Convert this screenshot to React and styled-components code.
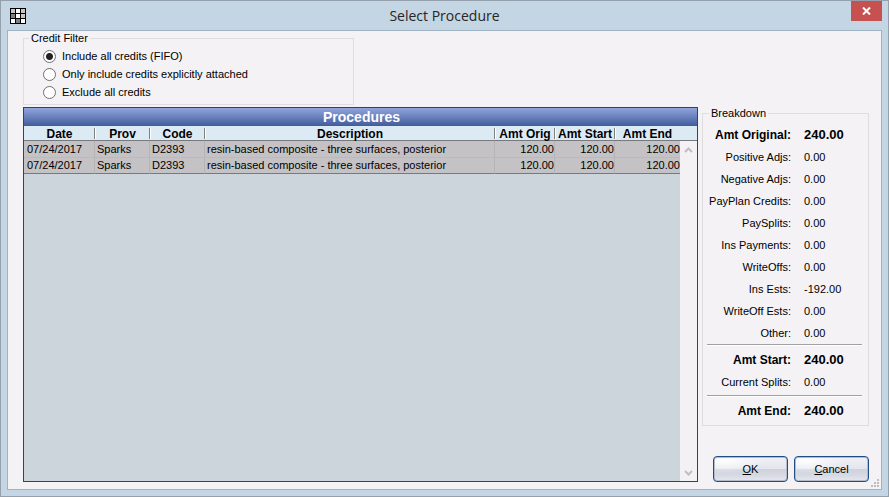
import React, { useState } from 'react'
import styled, { createGlobalStyle } from 'styled-components'

const filters = [
  'Include all credits (FIFO)',
  'Only include credits explicitly attached',
  'Exclude all credits',
]

const columns = [
  { title: 'Date', width: 71 },
  { title: 'Prov', width: 55 },
  { title: 'Code', width: 55 },
  { title: 'Description' },
  { title: 'Amt Orig', width: 60, right: true },
  { title: 'Amt Start', width: 60, right: true },
  { title: 'Amt End', width: 65, right: true },
]

const procedures = [
  ['07/24/2017', 'Sparks', 'D2393', 'resin-based composite - three surfaces, posterior', '120.00', '120.00', '120.00'],
  ['07/24/2017', 'Sparks', 'D2393', 'resin-based composite - three surfaces, posterior', '120.00', '120.00', '120.00'],
]

const breakdown = [
  [
    ['Amt Original:', '240.00', true],
    ['Positive Adjs:', '0.00'],
    ['Negative Adjs:', '0.00'],
    ['PayPlan Credits:', '0.00'],
    ['PaySplits:', '0.00'],
    ['Ins Payments:', '0.00'],
    ['WriteOffs:', '0.00'],
    ['Ins Ests:', '-192.00'],
    ['WriteOff Ests:', '0.00'],
    ['Other:', '0.00'],
  ],
  [
    ['Amt Start:', '240.00', true],
    ['Current Splits:', '0.00'],
  ],
  [['Amt End:', '240.00', true]],
]

export default function App() {
  const [filter, setFilter] = useState(0)

  return (
    <Window>
      <GlobalStyle />
      <TitleBar>
        <AppIcon />
        <Title>Select Procedure</Title>
        <CloseButton aria-label="Close">
          <svg width="9" height="8" viewBox="0 0 9 8">
            <path d="M1 .5 L8 7.5 M8 .5 L1 7.5" stroke="#fff" strokeWidth="2" />
          </svg>
        </CloseButton>
      </TitleBar>
      <Client>
        <FilterGroup>
          <Legend>Credit Filter</Legend>
          {filters.map((label, index) => (
            <RadioLabel key={label}>
              <Radio name="credits" checked={filter === index} onChange={() => setFilter(index)} />
              {label}
            </RadioLabel>
          ))}
        </FilterGroup>
        <Grid>
          <GridTitle>Procedures</GridTitle>
          <GridBody>
            <GridMain>
              <Table>
                <thead>
                  <tr>
                    {columns.map((col) => (
                      <Th key={col.title} $width={col.width}>{col.title}</Th>
                    ))}
                  </tr>
                </thead>
                <tbody>
                  {procedures.map((row, index) => (
                    <Tr key={index}>
                      {row.map((cell, i) => (
                        <Td key={i} $right={columns[i].right}>{cell}</Td>
                      ))}
                    </Tr>
                  ))}
                </tbody>
              </Table>
            </GridMain>
            <ScrollColumn>
              <ScrollHead />
              <ScrollBar>
                <ScrollButton aria-label="Scroll up"><Chevron d="M1 6 L4.5 2.5 L8 6" /></ScrollButton>
                <ScrollButton aria-label="Scroll down"><Chevron d="M1 2 L4.5 5.5 L8 2" /></ScrollButton>
              </ScrollBar>
            </ScrollColumn>
          </GridBody>
        </Grid>
        <Side>
          <BreakdownGroup>
            <Legend>Breakdown</Legend>
            {breakdown.map((rows, index) => (
              <React.Fragment key={index}>
                {index > 0 && <Rule />}
                <Totals>
                  {rows.map(([label, value, bold]) => (
                    <Total key={label} $bold={bold}>
                      <dt>{label}</dt>
                      <dd>{value}</dd>
                    </Total>
                  ))}
                </Totals>
              </React.Fragment>
            ))}
          </BreakdownGroup>
          <Buttons>
            <Button><u>O</u>K</Button>
            <Button><u>C</u>ancel</Button>
          </Buttons>
        </Side>
        <Grip />
      </Client>
    </Window>
  )
}

function AppIcon() {
  const fills = ['#c8c4c8', '#fff', '#c8c4c8', '#808080', '#fff', '#c8c4c8', '#fff', '#808080', '#fff']
  return (
    <IconSvg width="16" height="16" viewBox="0 0 16 16" shapeRendering="crispEdges">
      <rect width="16" height="16" fill="#000" />
      {fills.map((fill, i) => (
        <rect key={i} x={1 + (i % 3) * 5} y={1 + Math.floor(i / 3) * 5} width="4" height="4" fill={fill} />
      ))}
    </IconSvg>
  )
}

function Chevron({ d }) {
  return (
    <svg width="9" height="8" viewBox="0 0 9 8">
      <path d={d} fill="none" stroke="#bfbfbf" strokeWidth="2" />
    </svg>
  )
}

function Grip() {
  const dots = [[6, 0], [3, 3], [6, 3], [0, 6], [3, 6], [6, 6]]
  return (
    <GripSvg width="8" height="8" viewBox="0 0 8 8" shapeRendering="crispEdges">
      {dots.map(([x, y]) => <rect key={x + '-' + y} x={x} y={y} width="2" height="2" fill="#bfbdc0" />)}
    </GripSvg>
  )
}

const GlobalStyle = createGlobalStyle`
* {
  box-sizing: border-box;
}
body {
  margin: 0;
  font-family: "Liberation Sans", Arial, sans-serif;
  font-size: 11px;
  color: #000;
}
button, input {
  font: inherit;
  color: inherit;
}
`

const Window = styled.div`
display: flex;
flex-direction: column;
min-height: 100vh;
padding: 0 6px 6px;
border: 1px solid #94a1ad;
background-color: #c4d5e3;
`

const TitleBar = styled.header`
display: grid;
grid-template-columns: 1fr auto 1fr;
align-items: center;
height: 29px;
`

const IconSvg = styled.svg`
margin-left: 3px;
`

const Title = styled.h1`
margin: 0;
font-family: "Open Sans", "Segoe UI", sans-serif;
font-size: 14px;
font-weight: 400;
line-height: 20px;
color: #262626;
`

const CloseButton = styled.button`
display: flex;
align-items: center;
justify-content: center;
justify-self: end;
align-self: start;
width: 31px;
height: 20px;
padding: 0;
border: 0;
background-color: #c75050;
`

const Client = styled.main`
position: relative;
flex: 1;
display: grid;
grid-template-columns: 1fr 167px;
grid-template-rows: auto 1fr;
gap: 2px 4px;
padding: 1px 12px 7px 15px;
border: 1px solid #9fb3c2;
background-color: #f4f2f5;
`

const Group = styled.fieldset`
min-width: 0;
margin: 0;
border: 1px solid #dddcdf;
`

const FilterGroup = styled(Group)`
width: 100%;
max-width: 331px;
padding: 2px 19px 3px;
`

const BreakdownGroup = styled(Group)`
padding: 4px 6px 3px 4px;
`

const Legend = styled.legend`
margin-left: 2px;
padding: 0 2px;
line-height: 13px;

${FilterGroup} & {
  margin-left: -14px;
}
`

const RadioLabel = styled.label`
display: flex;
align-items: center;
gap: 6px;
height: 18px;
`

const Radio = styled.input.attrs({ type: 'radio' })`
appearance: none;
width: 13px;
height: 13px;
margin: 0;
border: 1px solid #707070;
border-radius: 50%;
background-color: #fff;

&:checked {
  background-image: radial-gradient(circle, #222 3px, transparent 4px);
}
`

const Grid = styled.section`
grid-row: 2;
display: flex;
flex-direction: column;
min-width: 0;
border: 1px solid #2b4275;
background-color: #ccd4dc;
`

const GridTitle = styled.h2`
height: 18px;
margin: 0;
padding-left: 2px;
background: linear-gradient(#90a5dc, #415c9c);
color: #fff;
font-size: 14px;
line-height: 18px;
text-align: center;
`

const GridBody = styled.div`
flex: 1;
display: flex;
`

const GridMain = styled.div`
flex: 1;
min-width: 0;
`

const Table = styled.table`
width: 100%;
table-layout: fixed;
border-collapse: separate;
border-spacing: 0;
`

const Th = styled.th`
width: ${(props) => (props.$width ? props.$width + 'px' : 'auto')};
height: 15px;
padding: 2px 0 0;
border-bottom: 1px solid #77797f;
background: linear-gradient(#808080, #808080) right 2px / 1px 11px no-repeat #dceaf4;
font-size: 12px;
line-height: 12px;
text-align: center;
white-space: nowrap;

& + & {
  background: linear-gradient(#fff, #fff) left 2px / 1px 11px no-repeat,
    linear-gradient(#808080, #808080) right 2px / 1px 11px no-repeat #dceaf4;
}

&:last-child {
  background: linear-gradient(#fff, #fff) left 2px / 1px 11px no-repeat #dceaf4;
}
`

const Td = styled.td`
height: 16px;
padding: 0 ${(props) => (props.$right ? 0 : 2)}px;
border-right: 1px solid #b5b5b5;
border-bottom: 1px solid #b4bcbd;
line-height: 15px;
text-align: ${(props) => (props.$right ? 'right' : 'left')};
white-space: nowrap;

&:first-child {
  padding-left: 3px;
}

&:last-child {
  border-right: 0;
}
`

const Tr = styled.tr`
background-color: #c4c2c4;

&:first-child ${Td} {
  padding-top: 1px;
  height: 17px;
}

&:last-child ${Td} {
  border-bottom-color: #77797f;
}
`

const ScrollColumn = styled.div`
display: flex;
flex-direction: column;
width: 17px;
`

const ScrollHead = styled.div`
height: 15px;
border-bottom: 1px solid #77797f;
background-color: #dceaf4;
`

const ScrollBar = styled.div`
flex: 1;
display: flex;
flex-direction: column;
justify-content: space-between;
background-color: #f3f1f4;
`

const ScrollButton = styled.button`
display: flex;
align-items: center;
justify-content: center;
height: 17px;
padding: 0;
border: 0;
background: none;
`

const Side = styled.aside`
grid-column: 2;
grid-row: 2;
display: flex;
flex-direction: column;
justify-content: space-between;
`

const Totals = styled.dl`
margin: 0;
`

const Total = styled.div`
display: grid;
grid-template-columns: 84px 1fr;
column-gap: 13px;
line-height: 22px;
font-size: ${(props) => (props.$bold ? 12 : 11)}px;
font-weight: ${(props) => (props.$bold ? 700 : 400)};
white-space: nowrap;

dt {
  justify-self: end;
}

dd {
  margin: 0;
  font-size: ${(props) => (props.$bold ? 13 : 11)}px;
}
`

const Rule = styled.hr`
height: 2px;
margin: 0 0 3px;
border: 0;
border-top: 1px solid #a0a0a0;
border-bottom: 1px solid #fff;

${Totals} + &:last-of-type {
  margin-top: 2px;
}
`

const Buttons = styled.div`
display: flex;
justify-content: flex-end;
gap: 6px;
`

const Button = styled.button`
width: 75px;
height: 26px;
padding: 0;
border: 1px solid #1f4d87;
border-radius: 4px;
background: radial-gradient(ellipse at 15% 15%, rgba(255, 255, 255, 0.9), transparent 45%),
  linear-gradient(#f0f1f6, #e4e6ed 48%, #cfd2dc 52%, #d6d9e2 75%, #e4e7ee);
box-shadow: inset 0 0 0 1px #b4bccb;
line-height: 22px;
`

const GripSvg = styled.svg`
position: absolute;
right: 2px;
bottom: 2px;
`
